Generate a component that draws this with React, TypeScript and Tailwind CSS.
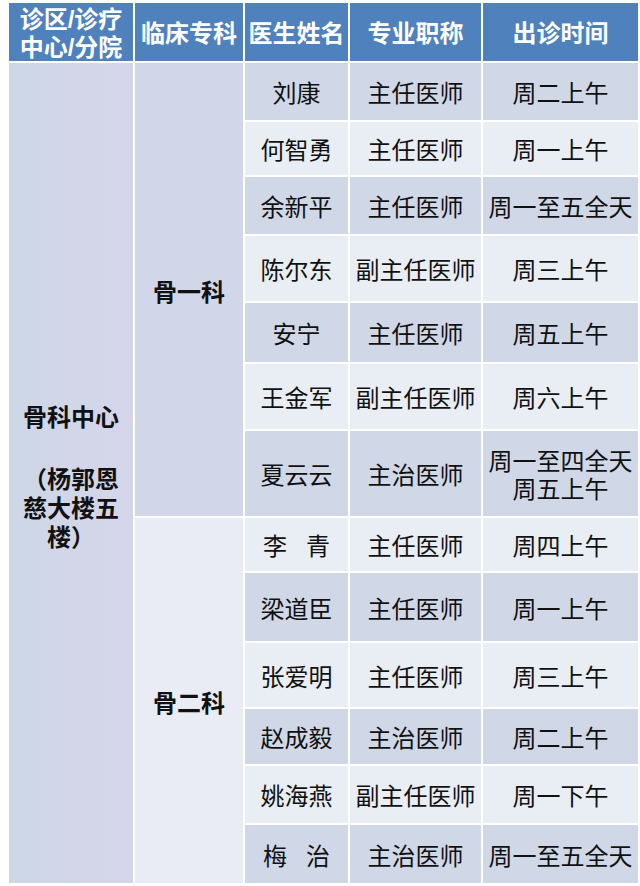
import React from "react";

type Doc = { name: string; title: string; time: string[] };

const DEPT_ONE: Doc[] = [
  { name: "刘康", title: "主任医师", time: ["周二上午"] },
  { name: "何智勇", title: "主任医师", time: ["周一上午"] },
  { name: "余新平", title: "主任医师", time: ["周一至五全天"] },
  { name: "陈尔东", title: "副主任医师", time: ["周三上午"] },
  { name: "安宁", title: "主任医师", time: ["周五上午"] },
  { name: "王金军", title: "副主任医师", time: ["周六上午"] },
  { name: "夏云云", title: "主治医师", time: ["周一至四全天", "周五上午"] },
];

const DEPT_TWO: Doc[] = [
  { name: "李 青", title: "主任医师", time: ["周四上午"] },
  { name: "梁道臣", title: "主任医师", time: ["周一上午"] },
  { name: "张爱明", title: "主任医师", time: ["周三上午"] },
  { name: "赵成毅", title: "主治医师", time: ["周二上午"] },
  { name: "姚海燕", title: "副主任医师", time: ["周一下午"] },
  { name: "梅 治", title: "主治医师", time: ["周一至五全天"] },
];

const ROWS = [...DEPT_ONE, ...DEPT_TWO];

function Header({ children }: { children: React.ReactNode }) {
  return (
    <div className="flex items-center justify-center bg-[#4f81bd] pt-[4px] text-center text-[24px] font-bold leading-[28px] text-white">
      {children}
    </div>
  );
}

function Name({ name }: { name: string }) {
  const parts = name.split(" ");
  return (
    <span className="flex gap-[19px]">
      {parts.map((p) => (
        <span key={p}>{p}</span>
      ))}
    </span>
  );
}

export default function App() {
  return (
    <div
      className="min-h-[886px] w-[640px] bg-white pl-[9px] pt-[3px]"
      style={{ fontFamily: '"Liberation Sans", "Noto Sans CJK SC", sans-serif' }}
    >
      <div className="grid w-[629px] grid-cols-[124px_108px_103px_131px_155px] grid-rows-[58px_57px_53px_57px_65px_59px_65px_85px_53px_68px_64px_55px_57px_58px] gap-[2px] bg-white text-[24px] text-[#111111]">
        <Header>
          <span>
            诊区/诊疗
            <br />
            中心/分院
          </span>
        </Header>
        <Header>临床专科</Header>
        <Header>医生姓名</Header>
        <Header>专业职称</Header>
        <Header>出诊时间</Header>

        {/* 诊区 */}
        <div className="col-start-1 row-start-2 row-span-13 flex flex-col items-center justify-center bg-gradient-to-r from-[#cdd7e6] to-[#d5d5ea] pt-[8px] text-center font-bold leading-[29px]">
          <div>骨科中心</div>
          <div className="mt-[33px]">
            （杨郭恩
            <br />
            慈大楼五
            <br />
            楼）
          </div>
        </div>

        {/* 专科 */}
        <div className="col-start-2 row-start-2 row-span-7 flex items-center justify-center bg-[#d2d6e9] pt-[6px] font-bold">
          骨一科
        </div>
        <div className="col-start-2 row-start-9 row-span-6 flex items-center justify-center bg-[#e9ecf5] pt-[6px] font-bold">
          骨二科
        </div>

        {ROWS.map((d, i) => {
          const bg = i % 2 === 0 ? "bg-[#d0d8e8]" : "bg-[#e9edf4]";
          return (
            <React.Fragment key={d.name}>
              <div className={`col-start-3 flex items-center justify-center pt-[5px] ${bg}`}>
                <Name name={d.name} />
              </div>
              <div className={`col-start-4 flex items-center justify-center pt-[5px] ${bg}`}>{d.title}</div>
              <div className={`col-start-5 flex flex-col items-center justify-center pt-[5px] leading-[28px] ${bg}`}>
                {d.time.map((t) => (
                  <span key={t}>{t}</span>
                ))}
              </div>
            </React.Fragment>
          );
        })}
      </div>
    </div>
  );
}
